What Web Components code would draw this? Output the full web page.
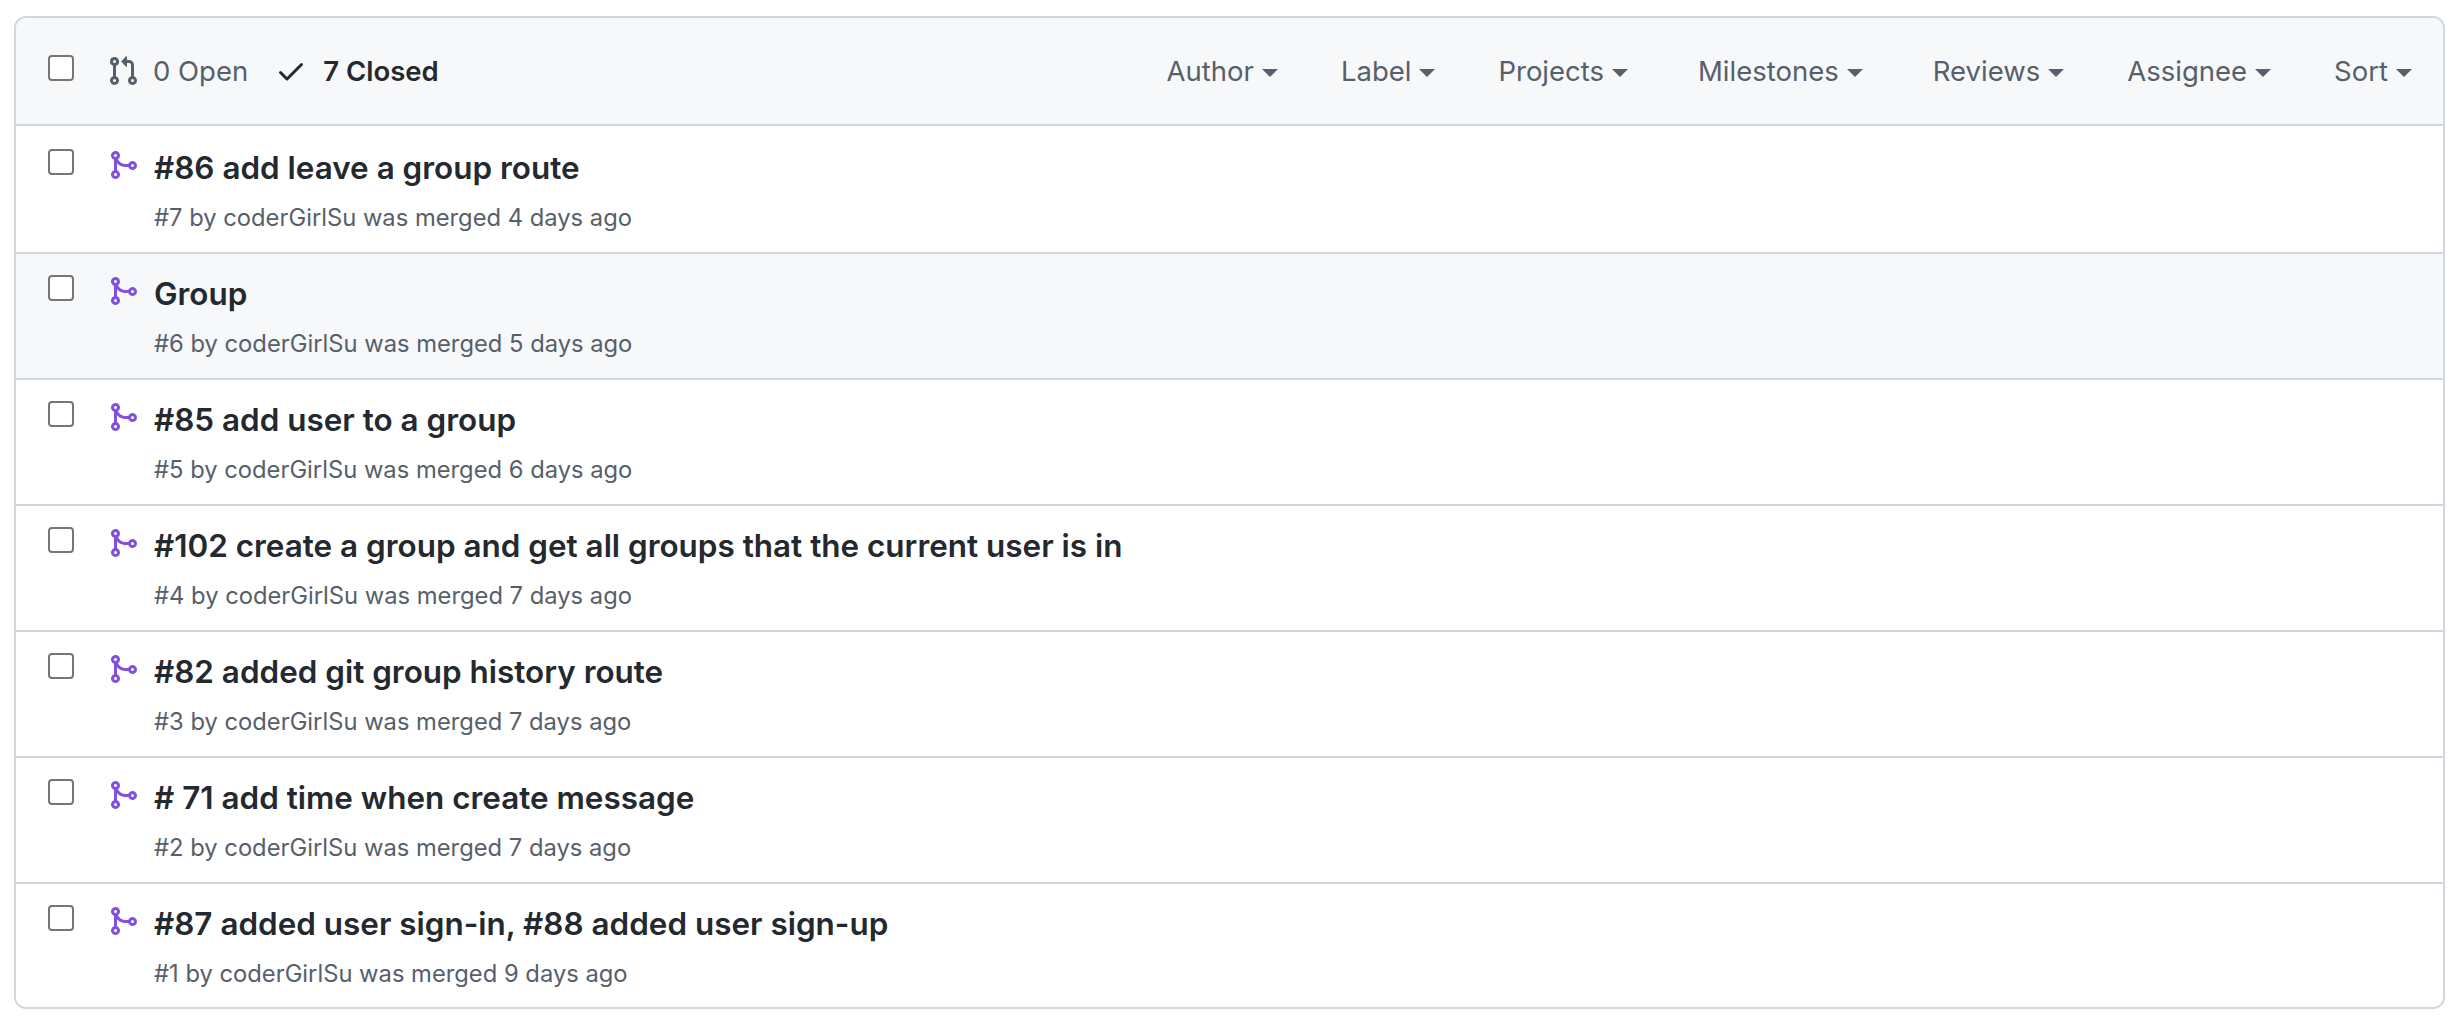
<!DOCTYPE html>
<html lang="en">
<head>
<meta charset="utf-8">
<title>Pull requests</title>
<style>
    body{
        margin: 0;
        padding: 16px 13px 8px 14px;
        background: #fff;
        font-family: Inter, "Liberation Sans", sans-serif;
        color: #24292f;
    }
</style>
</head>
<body>
<pr-list>
    <pr-header slot="header" open="0 Open" closed="7 Closed">
        <filter-menu>Author</filter-menu>
        <filter-menu>Label</filter-menu>
        <filter-menu>Projects</filter-menu>
        <filter-menu wide>Milestones</filter-menu>
        <filter-menu>Reviews</filter-menu>
        <filter-menu>Assignee</filter-menu>
        <filter-menu>Sort</filter-menu>
    </pr-header>
    <pr-row meta="#7 by coderGirlSu was merged 4 days ago">#86 add leave a group route</pr-row>
    <pr-row hover meta="#6 by coderGirlSu was merged 5 days ago">Group</pr-row>
    <pr-row meta="#5 by coderGirlSu was merged 6 days ago">#85 add user to a group</pr-row>
    <pr-row meta="#4 by coderGirlSu was merged 7 days ago">#102 create a group and get all groups that the current user is in</pr-row>
    <pr-row meta="#3 by coderGirlSu was merged 7 days ago">#82 added git group history route</pr-row>
    <pr-row meta="#2 by coderGirlSu was merged 7 days ago"># 71 add time when create message</pr-row>
    <pr-row meta="#1 by coderGirlSu was merged 9 days ago">#87 added user sign-in, #88 added user sign-up</pr-row>
</pr-list>

<script>
// iconos octicon que se repiten
const ICONS = {
    pull: 'M1.5 3.25a2.25 2.25 0 1 1 3 2.122v5.256a2.251 2.251 0 1 1-1.5 0V5.372A2.25 2.25 0 0 1 1.5 3.25Zm5.677-.177L9.573.677A.25.25 0 0 1 10 .854V2.5h1A2.5 2.5 0 0 1 13.5 5v5.628a2.251 2.251 0 1 1-1.5 0V5a1 1 0 0 0-1-1h-1v1.646a.25.25 0 0 1-.427.177L7.177 3.427a.25.25 0 0 1 0-.354ZM3.75 2.5a.75.75 0 1 0 0 1.5.75.75 0 0 0 0-1.5Zm0 9.5a.75.75 0 1 0 0 1.5.75.75 0 0 0 0-1.5Zm8.25.75a.75.75 0 1 0 1.5 0 .75.75 0 0 0-1.5 0Z',
    merge: 'M5.45 5.154A4.25 4.25 0 0 0 9.25 7.5h1.378a2.251 2.251 0 1 1 0 1.5H9.25A5.734 5.734 0 0 1 5 7.123v3.505a2.25 2.25 0 1 1-1.5 0V5.372a2.25 2.25 0 1 1 1.95-.218ZM4.25 13.5a.75.75 0 1 0 0-1.5.75.75 0 0 0 0 1.5Zm8.5-4.5a.75.75 0 1 0 0-1.5.75.75 0 0 0 0 1.5ZM5 3.25a.75.75 0 1 0 0 .005V3.25Z',
    check: 'M13.78 4.22a.75.75 0 0 1 0 1.06l-7.25 7.25a.75.75 0 0 1-1.06 0L2.22 9.28a.751.751 0 0 1 .018-1.042.751.751 0 0 1 1.042-.018L6 10.94l6.72-6.72a.75.75 0 0 1 1.06 0Z'
}
const icon = (name, size, color) => `<svg width="${size}" height="${size}" viewBox="0 0 16 16" fill="${color}" aria-hidden="true"><path d="${ICONS[name]}"></path></svg>`
const CHECKBOX = `
    input{
        appearance: none;
        flex: none;
        box-sizing: border-box;
        width: 26px;
        height: 26px;
        margin: 0;
        background: #fff;
        border: 2px solid #767676;
        border-radius: 4px;
    }
`

class PrList extends HTMLElement{
    static get styles(){
        return `
            :host{
                display: block;
                border: 2px solid #d0d7de;
                border-radius: 12px;
                overflow: hidden;
                background: #fff;
            }
        `
    }
    constructor(){
        super()
        this.attachShadow({mode: 'open'})
    }
    connectedCallback(){
        this.shadowRoot.innerHTML = `
            <style>${PrList.styles}</style>
            <slot name="header"></slot>
            <slot></slot>
        `
    }
}

class PrHeader extends HTMLElement{
    static get styles(){
        return `
            :host{
                display: flex;
                align-items: flex-start;
                box-sizing: border-box;
                height: 108px;
                padding: 37px 0 0 32px;
                background: #f6f8fa;
                border-bottom: 2px solid #d0d7de;
                font-size: 27.5px;
                line-height: 32px;
            }
            ${CHECKBOX}
            .state{
                display: flex;
                align-items: center;
                gap: 14px;
                height: 32px;
                color: #57606a;
            }
            .open{ margin-left: 33px; }
            .closed{ margin-left: 27px; gap: 16px; color: #24292f; font-weight: 600; }
            .filters{
                display: flex;
                gap: 63px;
                margin-left: auto;
                margin-right: 31px;
            }
        `
    }
    constructor(){
        super()
        this.attachShadow({mode: 'open'})
    }
    connectedCallback(){
        this.shadowRoot.innerHTML = `
            <style>${PrHeader.styles}</style>
            <input type="checkbox">
            <span class="state open">${icon('pull', 32, '#57606a')}${this.getAttribute('open')}</span>
            <span class="state closed">${icon('check', 32, '#24292f')}${this.getAttribute('closed')}</span>
            <div class="filters"><slot></slot></div>
        `
    }
}

class FilterMenu extends HTMLElement{
    static get styles(){
        return `
            :host{
                display: flex;
                align-items: center;
                gap: 8px;
                color: #57606a;
            }
            :host([wide]){ margin: 0 7px; }
            .caret{
                width: 0;
                height: 0;
                margin-top: 3px;
                border: 8px solid transparent;
                border-top-color: currentColor;
                border-bottom: 0;
            }
        `
    }
    constructor(){
        super()
        this.attachShadow({mode: 'open'})
    }
    connectedCallback(){
        this.shadowRoot.innerHTML = `
            <style>${FilterMenu.styles}</style>
            <slot></slot>
            <span class="caret"></span>
        `
    }
}

class PrRow extends HTMLElement{
    static get styles(){
        return `
            :host{
                display: flex;
                box-sizing: border-box;
                height: 126px;
                padding: 21px 0 0 32px;
                border-top: 2px solid #d0d7de;
                background: #fff;
            }
            :host(:first-of-type){ padding-top: 23px; border-top: 0; }
            :host(:last-child){ height: 125px; }
            :host([hover]){ background: #f6f8fa; }
            ${CHECKBOX}
            svg{
                flex: none;
                margin: 0 0 0 33px;
            }
            .text{ margin: -1px 0 0 15px; }
            .title{
                font-size: 31.45px;
                line-height: 40px;
                font-weight: 600;
                color: #24292f;
            }
            .meta{
                margin-top: 14px;
                font-size: 23.75px;
                line-height: 32px;
                color: #57606a;
            }
        `
    }
    constructor(){
        super()
        this.attachShadow({mode: 'open'})
    }
    connectedCallback(){
        this.shadowRoot.innerHTML = `
            <style>${PrRow.styles}</style>
            <input type="checkbox">
            ${icon('merge', 32, '#8250df')}
            <div class="text">
                <div class="title"><slot></slot></div>
                <div class="meta">${this.getAttribute('meta')}</div>
            </div>
        `
    }
}

customElements.define('pr-list', PrList)
customElements.define('pr-header', PrHeader)
customElements.define('filter-menu', FilterMenu)
customElements.define('pr-row', PrRow)
</script>
</body>
</html>
